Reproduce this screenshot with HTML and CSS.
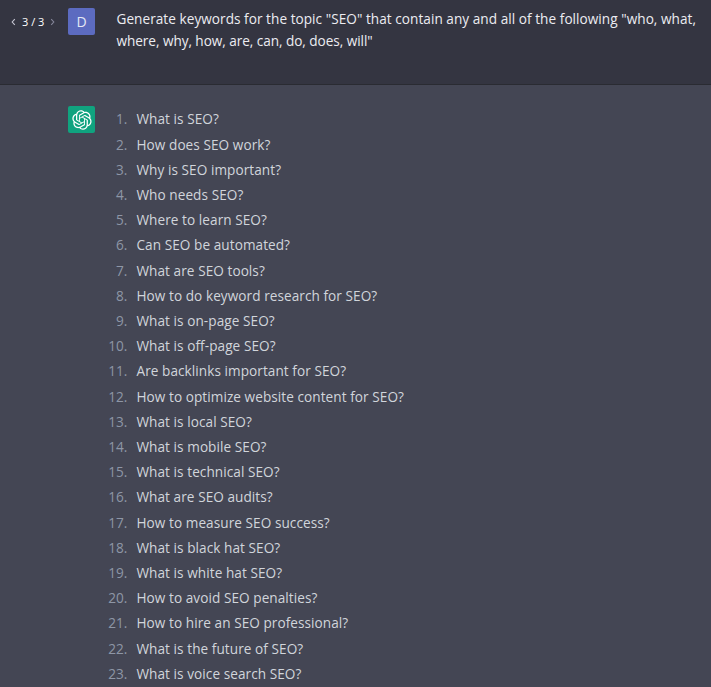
FILE: index.html
```html
<!DOCTYPE html>
<html lang="en">
<head>
<meta charset="utf-8">
<title>SEO keywords</title>
<link rel="stylesheet" href="styles.css">
</head>
<body>
<main class="chat">
  <section class="message user">
    <nav class="pager">
      <svg class="chevron" viewBox="0 0 5 8"><path d="M3.8 1.2 1.2 4l2.6 2.8"/></svg>
      <span class="count">3 / 3</span>
      <svg class="chevron dim" viewBox="0 0 5 8"><path d="M1.2 1.2 3.8 4 1.2 6.8"/></svg>
    </nav>
    <div class="avatar initial">D</div>
    <p class="prompt"><span class="line first">Generate keywords for the topic "SEO" that contain any and all of the following "who, what,</span> <span class="line">where, why, how, are, can, do, does, will"</span></p>
  </section>
  <section class="message assistant">
    <div class="avatar logo">
      <svg viewBox="0 0 41 41"><path d="M37.5324 16.8707C37.9808 15.5241 38.1363 14.0974 37.9886 12.6859C37.8409 11.2744 37.3934 9.91076 36.676 8.68622C35.6126 6.83404 33.9882 5.3676 32.0373 4.4985C30.0864 3.62941 27.9098 3.40259 25.8215 3.85078C24.8796 2.7893 23.7219 1.94125 22.4257 1.36341C21.1295 0.785575 19.7249 0.491269 18.3058 0.500197C16.1708 0.495044 14.0893 1.16803 12.3614 2.42214C10.6335 3.67624 9.34853 5.44666 8.6917 7.47815C7.30085 7.76286 5.98686 8.3414 4.8377 9.17505C3.68854 10.0087 2.73073 11.0782 2.02839 12.312C0.956464 14.1591 0.498905 16.2988 0.721698 18.4228C0.944492 20.5467 1.83612 22.5449 3.268 24.1293C2.81966 25.4759 2.66413 26.9026 2.81182 28.3141C2.95951 29.7256 3.40701 31.0892 4.12437 32.3138C5.18791 34.1659 6.8123 35.6322 8.76321 36.5013C10.7141 37.3704 12.8907 37.5973 14.9789 37.1492C15.9208 38.2107 17.0786 39.0587 18.3747 39.6366C19.6709 40.2144 21.0755 40.5087 22.4946 40.4998C24.6307 40.5054 26.7133 39.8321 28.4418 38.5772C30.1704 37.3223 31.4556 35.5506 32.1119 33.5179C33.5027 33.2332 34.8167 32.6547 35.9659 31.821C37.115 30.9874 38.0728 29.9178 38.7752 28.684C39.8458 26.8371 40.3023 24.6979 40.0789 22.5748C39.8556 20.4517 38.9639 18.4544 37.5324 16.8707ZM22.4978 37.8849C20.7443 37.8874 19.0459 37.2733 17.6994 36.1501C17.7601 36.117 17.8666 36.0586 17.936 36.0161L25.9004 31.4156C26.1003 31.3019 26.2663 31.137 26.3813 30.9378C26.4964 30.7386 26.5563 30.5124 26.5549 30.2825V19.0542L29.9213 20.998C29.9389 21.0068 29.9541 21.0198 29.9656 21.0359C29.977 21.052 29.9842 21.0707 29.9867 21.0902V30.3889C29.9842 32.375 29.1946 34.2791 27.7909 35.6841C26.3872 37.0892 24.4838 37.8806 22.4978 37.8849ZM6.39227 31.0064C5.51397 29.4888 5.19742 27.7107 5.49804 25.9832C5.55718 26.0187 5.66048 26.0818 5.73461 26.1244L13.699 30.7248C13.8975 30.8408 14.1233 30.902 14.3532 30.902C14.583 30.902 14.8088 30.8408 15.0073 30.7248L24.731 25.1103V28.9979C24.7321 29.0177 24.7283 29.0376 24.7199 29.0556C24.7115 29.0736 24.6988 29.0893 24.6829 29.1012L16.6317 33.7497C14.9096 34.7416 12.8643 35.0097 10.9447 34.4954C9.02506 33.9811 7.38785 32.7263 6.39227 31.0064ZM4.29707 13.6194C5.17156 12.0998 6.55279 10.9364 8.19885 10.3327C8.19885 10.4013 8.19491 10.5228 8.19491 10.6071V19.808C8.19351 20.0378 8.25334 20.2638 8.36823 20.4629C8.48312 20.6619 8.64893 20.8267 8.84863 20.9404L18.5723 26.5542L15.206 28.4979C15.1894 28.5089 15.1703 28.5155 15.1505 28.5173C15.1307 28.5191 15.1107 28.516 15.0924 28.5082L7.04046 23.8557C5.32135 22.8601 4.06716 21.2235 3.55289 19.3046C3.03862 17.3858 3.30624 15.3413 4.29707 13.6194ZM31.955 20.0556L22.2312 14.4411L25.5976 12.4981C25.6142 12.4872 25.6333 12.4805 25.6531 12.4787C25.6729 12.4769 25.6928 12.4801 25.7111 12.4879L33.7631 17.1364C34.9967 17.849 36.0017 18.8982 36.6606 20.1613C37.3194 21.4244 37.6047 22.849 37.4832 24.2684C37.3617 25.6878 36.8382 27.0432 35.9743 28.1759C35.1103 29.3086 33.9415 30.1717 32.6047 30.6641C32.6047 30.5947 32.6047 30.4733 32.6047 30.3889V21.188C32.6066 20.9586 32.5474 20.7328 32.4332 20.5338C32.319 20.3348 32.154 20.1698 31.955 20.0556ZM35.3055 15.0128C35.2464 14.9765 35.1431 14.9142 35.069 14.8717L27.1045 10.2712C26.906 10.1554 26.6803 10.0943 26.4504 10.0943C26.2206 10.0943 25.9948 10.1554 25.7963 10.2712L16.0726 15.8858V11.9982C16.0715 11.9783 16.0753 11.9585 16.0837 11.9405C16.0921 11.9225 16.1048 11.9068 16.1207 11.8949L24.1719 7.25025C25.4053 6.53903 26.8158 6.19376 28.2383 6.25482C29.6608 6.31589 31.0364 6.78077 32.2044 7.59508C33.3723 8.40939 34.2842 9.53945 34.8334 10.8531C35.3826 12.1667 35.5464 13.6095 35.3055 15.0128ZM14.2424 21.9419L10.8752 19.9981C10.8576 19.9893 10.8423 19.9763 10.8309 19.9602C10.8195 19.9441 10.8122 19.9254 10.8098 19.9058V10.6071C10.8107 9.18295 11.2173 7.78848 11.9819 6.58696C12.7466 5.38544 13.8377 4.42659 15.1275 3.82264C16.4173 3.21869 17.8524 2.99464 19.2649 3.1767C20.6775 3.35876 22.0089 3.93941 23.1034 4.85067C23.0427 4.88379 22.937 4.94215 22.8668 4.98473L14.9024 9.58517C14.7025 9.69878 14.5366 9.86356 14.4215 10.0626C14.3065 10.2616 14.2466 10.4877 14.2479 10.7175L14.2424 21.9419ZM16.071 17.9991L20.4018 15.4978L24.7325 17.9975V22.9985L20.4018 25.4983L16.071 22.9985V17.9991Z"/></svg>
    </div>
    <ol class="answers">
      <li>What is SEO?</li>
      <li>How does SEO work?</li>
      <li>Why is SEO important?</li>
      <li>Who needs SEO?</li>
      <li>Where to learn SEO?</li>
      <li>Can SEO be automated?</li>
      <li>What are SEO tools?</li>
      <li>How to do keyword research for SEO?</li>
      <li>What is on-page SEO?</li>
      <li>What is off-page SEO?</li>
      <li>Are backlinks important for SEO?</li>
      <li>How to optimize website content for SEO?</li>
      <li>What is local SEO?</li>
      <li>What is mobile SEO?</li>
      <li>What is technical SEO?</li>
      <li>What are SEO audits?</li>
      <li>How to measure SEO success?</li>
      <li>What is black hat SEO?</li>
      <li>What is white hat SEO?</li>
      <li>How to avoid SEO penalties?</li>
      <li>How to hire an SEO professional?</li>
      <li>What is the future of SEO?</li>
      <li>What is voice search SEO?</li>
    </ol>
  </section>
</main>
</body>
</html>
```
FILE: styles.css
```css
* { box-sizing: border-box; }

body {
  margin: 0;
  height: 687px;
  overflow: hidden;
  background: #444654;
  font-family: "Open Sans", "Noto Sans", sans-serif;
  font-size: 13.6px;
}

.message {
  display: grid;
  grid-template-columns: 68px 27px 1fr;
  align-items: start;
}

.user {
  height: 85px;
  padding-top: 8px;
  background: #343541;
  border-bottom: 1px solid #2a2b32;
  color: #ececf1;
}

.pager {
  display: flex;
  align-items: center;
  height: 27px;
  padding-left: 11px;
  color: #fff;
  font-size: 11px;
}

.count {
  width: 24px;
  margin: 0 4px 0 6px;
  white-space: nowrap;
}

.chevron {
  width: 5px;
  height: 8px;
  fill: none;
  stroke: #c5c5d2;
  stroke-width: 1.1;
}

.dim { stroke: #85869a; }

.avatar {
  grid-column: 2;
  display: flex;
  align-items: center;
  justify-content: center;
  width: 27px;
  height: 27px;
  border-radius: 2px;
}

.initial {
  background: #5c6bc0;
  color: #e4e8f6;
  font-size: 14px;
  font-weight: 500;
}

.logo { background: #10a37f; }

.logo svg {
  width: 20px;
  height: 20px;
  fill: #fff;
}

.prompt {
  margin: 0 0 0 21.5px;
  line-height: 22px;
}

.line {
  display: block;
  white-space: nowrap;
  letter-spacing: -0.05px;
}

.first { letter-spacing: 0.045px; }

.assistant { padding-top: 21.3px; }

.logo { margin-top: -0.3px; }

.answers {
  margin: 0;
  padding: 0 0 0 41.5px;
  list-style: none;
  counter-reset: item;
  color: #d1d5db;
  line-height: 25.2px;
  letter-spacing: 0.06px;
}

.answers li {
  counter-increment: item;
  white-space: nowrap;
}

.answers li::before {
  content: counter(item) ".";
  display: inline-block;
  width: 32px;
  margin: 0 9px 0 -41px;
  text-align: right;
  color: #8e96a6;
}
```
